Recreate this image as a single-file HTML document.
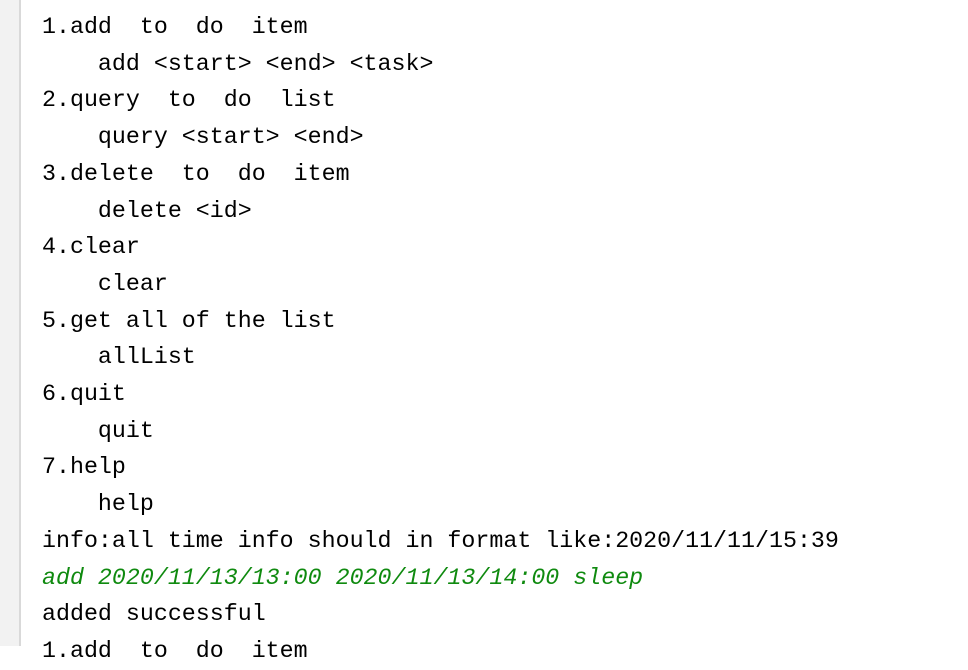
<!DOCTYPE html>
<html><head><style>
html,body{margin:0;padding:0;width:968px;height:646px;overflow:hidden;background:#fff}
.g{position:absolute;left:0;top:0;width:19px;height:646px;background:#f2f2f2;border-right:2px solid #d9d9d9}
pre{position:absolute;left:42px;top:9px;margin:0;font-family:"Liberation Mono",monospace;font-size:23.3px;line-height:36.7px;color:#000}
.i{color:#0f8a0f;font-style:italic}
</style></head><body>
<div class="g"></div>
<pre>1.add  to  do  item
    add &lt;start&gt; &lt;end&gt; &lt;task&gt;
2.query  to  do  list
    query &lt;start&gt; &lt;end&gt;
3.delete  to  do  item
    delete &lt;id&gt;
4.clear
    clear
5.get all of the list
    allList
6.quit
    quit
7.help
    help
info:all time info should in format like:2020/11/11/15:39
<span class="i">add 2020/11/13/13:00 2020/11/13/14:00 sleep</span>
added successful
1.add  to  do  item</pre>
</body></html>
